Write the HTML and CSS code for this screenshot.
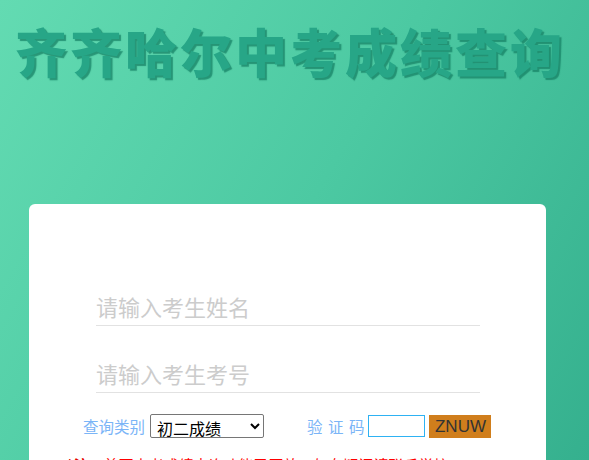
FILE: index.html
```html
<!DOCTYPE html>
<html lang="zh-CN">
<head>
  <meta charset="UTF-8" />
  <meta name="viewport" content="width=device-width, initial-scale=1.0"/>
  <title>齐齐哈尔中考成绩查询</title>
  <link rel="stylesheet" href="styles.css">
</head>
<body>
  <h1 class="title">齐齐哈尔中考成绩查询</h1>
  <div class="query-box">
    <form id="queryForm">
      <input type="text" class="line-input" id="name" placeholder="请输入考生姓名" />
      <input type="text" class="line-input" id="number" placeholder="请输入考生考号" />
      <div class="query-row">
        <label for="type">查询类别</label>
        <select id="type">
          <option>初二成绩</option>
          <option>中考成绩</option>
        </select>
        <label for="code" class="code-label">验 证 码</label>
        <input type="text" id="code" class="code-input" />
        <span class="code-img">ZNUW</span>
      </div>
      <p class="note"><b>*注：</b>首页中考成绩查询功能已开放，如有疑问请联系学校。</p>
    </form>
  </div>
</body>
</html>
```

FILE: styles.css
```css
* {
  box-sizing: border-box;
}

body {
  margin: 0;
  height: 100vh;
  font-family: "Microsoft YaHei", "Noto Sans CJK SC", sans-serif;
  background: linear-gradient(120deg, #63dbb2 0%, #4cc9a2 50%, #35b08e 100%);
  overflow: hidden;
}

.title {
  margin: 0;
  padding: 18px 0 0 15px;
  font-size: 52px;
  font-weight: 900;
  letter-spacing: 3px;
  line-height: 66px;
  color: #27a687;
  text-shadow: 2px 2px 1px rgba(22, 128, 100, 0.75);
  white-space: nowrap;
}

.query-box {
  margin: 120px 0 0 29px;
  width: 517px;
  height: 300px;
  background: #fff;
  border-radius: 6px;
  padding: 82px 66px 0 67px;
}

.line-input {
  display: block;
  width: 384px;
  height: 40px;
  border: none;
  border-bottom: 1px solid #e2e2e2;
  font-family: inherit;
  font-size: 22px;
  padding: 0;
  margin-bottom: 27px;
  outline: none;
}

.line-input::placeholder {
  color: #cccccc;
}

.query-row {
  display: flex;
  align-items: center;
  margin: -6px 0 0 -13px;
  font-size: 15.5px;
  white-space: nowrap;
}

.query-row > * {
  flex-shrink: 0;
}

.query-row label {
  color: #7bb5f7;
}

select {
  margin-left: 5px;
  width: 114px;
  height: 24px;
  padding: 0 2px;
  font-family: inherit;
  font-size: 16px;
  line-height: 20px;
  color: #000;
  border: 1px solid #767676;
  border-radius: 2px;
  background: #fff;
}

.code-label {
  margin-left: 43px;
  word-spacing: 2px;
}

.code-input {
  margin-left: 4px;
  width: 57px;
  height: 22px;
  border: 1px solid #2eb2f3;
  padding: 0 3px;
}

.code-img {
  margin-left: 4px;
  width: 62px;
  height: 23px;
  background: #d07e1c;
  color: #333;
  font-family: "Liberation Sans", Arial, sans-serif;
  font-size: 17px;
  line-height: 23px;
  text-align: center;
}

.note {
  margin: 16px 0 0 -30px;
  font-size: 15px;
  color: #f00;
}

.note b {
  color: #e60000;
}
```
